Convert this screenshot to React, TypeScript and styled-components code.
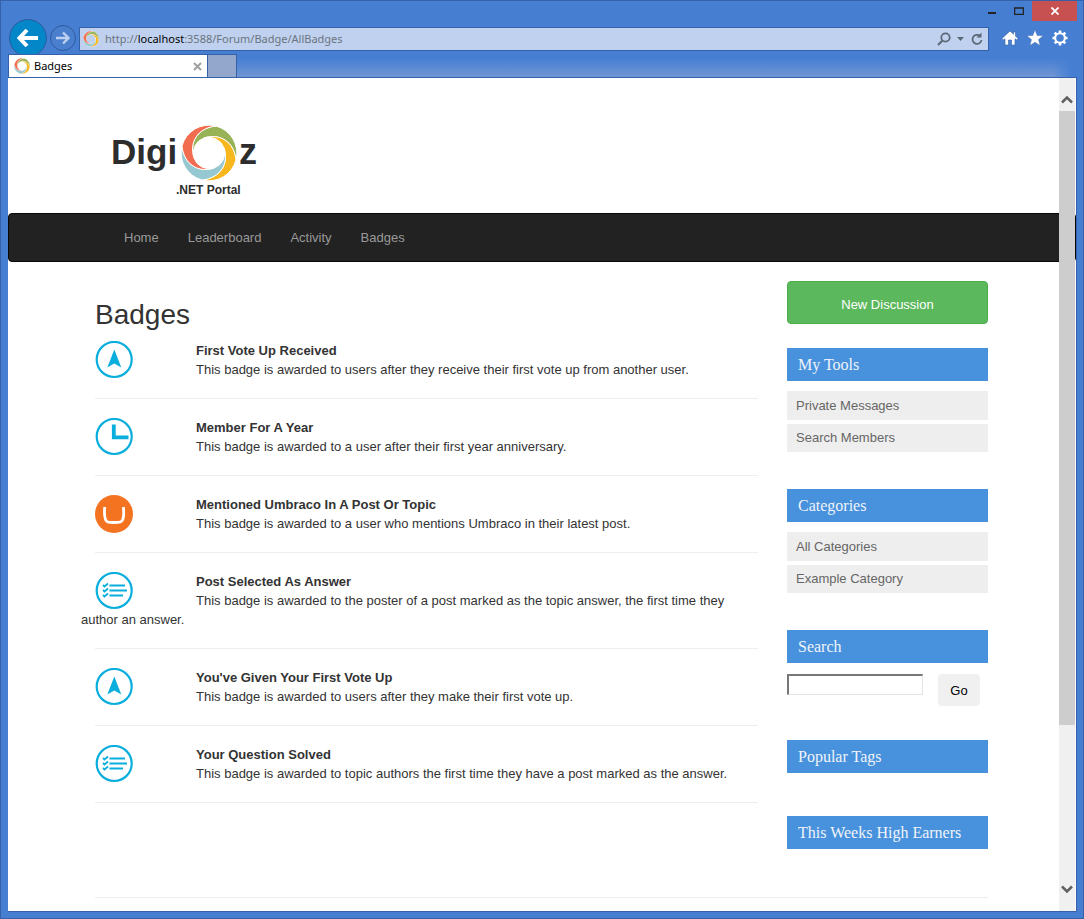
import React from 'react';
import styled, { createGlobalStyle } from 'styled-components';

const Global = createGlobalStyle`
  *, *::before, *::after { box-sizing: border-box; }
  body { margin: 0; background: #467fd2; }
  h1, h2, p, ul { margin: 0; padding: 0; }
  button, input { font: inherit; }
  a { color: inherit; text-decoration: none; }
`;

const sans = '"Liberation Sans", Arial, sans-serif';
const serif = '"Liberation Serif", "Times New Roman", serif';
const chromeFont = '"Noto Sans", "Segoe UI", sans-serif';

const Frame = styled.div`
  display: flex;
  flex-direction: column;
  min-height: 100vh;
  padding: 0 6px 6px 7px;
  background: #467fd2;
  border: 1px solid #3561a8;
`;

const TitleBar = styled.div`
  display: flex;
  justify-content: flex-end;
  height: 20px;
`;

const WindowButton = styled.button<{ $close?: boolean }>`
  display: flex;
  align-items: center;
  justify-content: center;
  width: ${(p) => (p.$close ? 45 : 27)}px;
  height: 20px;
  padding: 0;
  border: 0;
  color: ${(p) => (p.$close ? '#fff' : '#222')};
  background: ${(p) => (p.$close ? '#c75050' : 'transparent')};
`;

const Toolbar = styled.div`
  display: flex;
  align-items: center;
  height: 33px;
  padding-right: 8px;
`;

const RoundButton = styled.button<{ $primary?: boolean }>`
  flex: none;
  display: flex;
  align-items: center;
  justify-content: center;
  width: ${(p) => (p.$primary ? 38 : 26)}px;
  height: ${(p) => (p.$primary ? 38 : 26)}px;
  margin-left: ${(p) => (p.$primary ? 1 : 3)}px;
  padding: 0;
  border: 1px solid #2f5a9f;
  border-radius: 50%;
  background: ${(p) => (p.$primary ? '#0487c8' : '#4a7fce')};
`;

const AddressBar = styled.div`
  flex: 1;
  display: flex;
  align-items: center;
  gap: 6px;
  height: 24px;
  margin: 3px 12px 0 3px;
  padding: 0 4px 0 3px;
  border: 1px solid #3561a8;
  background: #bfd1ee;
  font: 11px/22px ${chromeFont};
  color: #6b7480;
`;

const Url = styled.div`
  flex: 1;
  white-space: nowrap;
  b { font-weight: 400; color: #000; }
`;

const IconButton = styled.button`
  display: flex;
  align-items: center;
  justify-content: center;
  padding: 0;
  border: 0;
  background: transparent;
`;

const Actions = styled.div`
  display: flex;
  gap: 7px;
`;

const TabStrip = styled.div`
  display: flex;
  height: 23px;
  background:
    linear-gradient(to right, transparent calc(100% - 24px), #467fd2 calc(100% - 6px)),
    linear-gradient(#467fd2 20%, #7196d3);
`;

const Tab = styled.div`
  display: flex;
  align-items: center;
  gap: 4px;
  width: 200px;
  padding: 0 5px;
  border: 1px solid #3561a8;
  border-bottom: 0;
  background: #fff;
  font: 11px/22px ${chromeFont};
  color: #000;
  span { flex: 1; }
`;

const NewTab = styled.button`
  width: 29px;
  padding: 0;
  border: 1px solid #3561a8;
  border-width: 1px 1px 0 0;
  background: #93a7cc;
`;

const Viewport = styled.div`
  position: relative;
  flex: 1;
  border: 1px solid #3561a8;
  border-width: 1px 1px 1px 0;
  background: #fff;
  font: 13px/19px ${sans};
  color: #333;
`;

const ScrollBar = styled.div`
  position: absolute;
  top: 0;
  right: 1px;
  bottom: 0;
  display: flex;
  flex-direction: column;
  width: 16px;
  background: #f0f0f0;
`;

const ScrollArrow = styled.button<{ $down?: boolean }>`
  display: flex;
  align-items: center;
  justify-content: center;
  height: 33px;
  flex: none;
  padding: ${(p) => (p.$down ? '0 0 10px' : '10px 0 0')};
  border: 0;
  background: #f0f0f0;
`;

const ScrollTrack = styled.div`
  flex: 1;
`;

const ScrollThumb = styled.div`
  height: 80%;
  background: #cdcdcd;
`;

const Container = styled.div`
  margin: 0 88px 0 87px;
`;

const LogoLink = styled.a`
  display: block;
  width: 180px;
  height: 135px;
  padding: 35px 0 0 5px;
`;

const Nav = styled.nav`
  height: 49px;
  border: 1px solid #080808;
  border-radius: 4px;
  background: #222;
`;

const NavList = styled(Container)`
  display: flex;
  gap: 29px;
  padding-left: 28px;
  line-height: 47px;
  color: #999;
`;

const Columns = styled(Container)`
  display: grid;
  grid-template-columns: 1fr 201px;
  gap: 29px;
  padding-top: 19px;
`;

const Title = styled.h1`
  margin: 16px 0 8px;
  font: 400 28px/36px ${sans};
`;

const BadgeItem = styled.article`
  margin-bottom: 19px;
  padding-bottom: 19px;
  border-bottom: 1px solid #eee;
`;

const BadgeIcon = styled.svg`
  float: left;
  width: 38px;
  height: 38px;
  margin-right: 63px;
`;

const BadgeName = styled.h2`
  font: 700 13px/19px ${sans};
`;

const BadgeText = styled.p`
  margin-left: -14px;
`;

const NewDiscussion = styled.button`
  display: block;
  width: 100%;
  height: 43px;
  margin-bottom: 24px;
  padding: 3px 0 0;
  border: 1px solid #4cae4c;
  border-radius: 4px;
  background: #5cb85c;
  color: #fff;
`;

const Panel = styled.section<{ $gap?: number }>`
  margin-bottom: ${(p) => p.$gap ?? 37}px;
`;

const PanelTitle = styled.h2`
  padding: 0 11px;
  background: #4891dc;
  color: #f0f4fa;
  font: 400 16px/33px ${serif};
`;

const PanelLink = styled.a<{ $first?: boolean }>`
  display: block;
  margin-top: ${(p) => (p.$first ? 10 : 4)}px;
  padding: 0 9px;
  background: #eee;
  color: #666;
  line-height: ${(p) => (p.$first ? 29 : 28)}px;
`;

const SearchForm = styled.form`
  display: flex;
  align-items: flex-start;
  gap: 15px;
  padding-top: 11px;
  input {
    width: 136px;
    height: 21px;
    padding: 1px 4px;
    border: 1px solid;
    border-color: #777 #e3e3e3 #e3e3e3 #777;
    border-width: 2px 1px 1px 2px;
    background: #fff;
  }
  button {
    width: 42px;
    height: 32px;
    padding: 0;
    border: 0;
    border-radius: 4px;
    background: #f0f0f0;
    color: #000;
  }
`;

const FooterRule = styled(Container)`
  margin-top: 5px;
  height: 13px;
  border-top: 1px solid #eee;
`;

const ringColours = ['#98b355', '#f9b71e', '#96c8d1', '#f26c4f'];

const Ring = () => (
  <g transform="translate(28 28)">
    {ringColours.map((colour, i) => (
      <path
        key={colour}
        d="M-15 5C-20 -10 -12 -25 7 -27A28 28 0 0 1 27 7C25 -12 10 -20 -5 -15A16 16 0 0 0 -15 5Z"
        fill={colour}
        stroke="#fff"
        strokeWidth="1"
        transform={`rotate(${i * 90})`}
      />
    ))}
  </g>
);

const MiniRing = () => (
  <svg width="16" height="16" viewBox="0 0 56 56" aria-hidden="true"><Ring /></svg>
);

const Logo = () => (
  <svg width="170" height="84" viewBox="0 0 170 84" role="img" aria-label="DigiOz .NET Portal">
    <g fontFamily='"Liberation Sans", Arial, sans-serif' fontWeight="700" fill="#2d2d2d">
      <text x="11" y="51" fontSize="35">Digi</text>
      <text x="139" y="51" fontSize="36">z</text>
      <text x="76" y="81" fontSize="12">.NET Portal</text>
    </g>
    <g transform="translate(81 12)"><Ring /></g>
  </svg>
);

type Kind = 'vote' | 'clock' | 'umbraco' | 'list';

const BadgeGlyph = ({ kind }: { kind: Kind }) => (
  <BadgeIcon viewBox="0 0 38 38" aria-hidden="true">
    {kind === 'umbraco' ? (
      <>
        <circle cx="19" cy="19" r="19" fill="#f47321" />
        <path d="M9.800 12C9.200 17 9.600 22 10.500 24.500C11.500 27.200 13 27.500 19 27.500C25 27.500 26.700 27.200 27.800 24.500C28.700 22 28.900 17 28.300 12" fill="none" stroke="#fff" strokeWidth="2.800" />
      </>
    ) : (
      <circle cx="19.200" cy="18.500" r="17.500" fill="none" stroke="#0aaedd" strokeWidth="2.200" />
    )}
    {kind === 'vote' && <path d="M19.300 8.500L26.300 26.500L19.300 22.500L12.300 26.500Z" fill="#0aaedd" />}
    {kind === 'clock' && <path d="M18.800 6.500V19.300H33.500" fill="none" stroke="#0aaedd" strokeWidth="3.800" />}
    {kind === 'list' && (
      <path d="M8 13L9.500 14.500L13 11.500M8 18L9.500 19.500L13 16.500M8 23L9.500 24.500L13 21.500M14.500 13.500H30M14.500 18.500H32M14.500 23.500H28" fill="none" stroke="#0aaedd" strokeWidth="1.800" />
    )}
  </BadgeIcon>
);

const badges: { kind: Kind; name: string; text: string }[] = [
  { kind: 'vote', name: 'First Vote Up Received', text: 'This badge is awarded to users after they receive their first vote up from another user.' },
  { kind: 'clock', name: 'Member For A Year', text: 'This badge is awarded to a user after their first year anniversary.' },
  { kind: 'umbraco', name: 'Mentioned Umbraco In A Post Or Topic', text: 'This badge is awarded to a user who mentions Umbraco in their latest post.' },
  { kind: 'list', name: 'Post Selected As Answer', text: 'This badge is awarded to the poster of a post marked as the topic answer, the first time they author an answer.' },
  { kind: 'vote', name: "You've Given Your First Vote Up", text: 'This badge is awarded to users after they make their first vote up.' },
  { kind: 'list', name: 'Your Question Solved', text: 'This badge is awarded to topic authors the first time they have a post marked as the answer.' },
];

const navItems = ['Home', 'Leaderboard', 'Activity', 'Badges'];

const gearTeeth = [0, 45, 90, 135, 180, 225, 270, 315];

export default function App() {
  return (
    <>
      <Global />
      <Frame>
        <TitleBar>
          <WindowButton aria-label="Minimize"><svg width="8" height="8"><path d="M0 6H8" stroke="currentColor" strokeWidth="2" /></svg></WindowButton>
          <WindowButton aria-label="Maximize"><svg width="10" height="8"><path d="M.5 1V7.500H9.500V1M0 1H10" fill="none" stroke="currentColor" strokeWidth="1.500" /></svg></WindowButton>
          <WindowButton $close aria-label="Close"><svg width="8" height="8"><path d="M.5 .5L7.500 7.500M7.500 .5L.5 7.500" stroke="currentColor" strokeWidth="1.800" /></svg></WindowButton>
        </TitleBar>
        <Toolbar>
          <RoundButton $primary aria-label="Back"><svg width="22" height="20"><path d="M21 10H3M10 2L2.500 10L10 18" fill="none" stroke="#fff" strokeWidth="4" /></svg></RoundButton>
          <RoundButton aria-label="Forward"><svg width="14" height="14"><path d="M0 7H12M7 1.500L12.500 7L7 12.500" fill="none" stroke="#bdd0ef" strokeWidth="2.400" /></svg></RoundButton>
          <AddressBar>
            <MiniRing />
            <Url>http://<b>localhost</b>:3588/Forum/Badge/AllBadges</Url>
            <IconButton aria-label="Search"><svg width="14" height="14"><circle cx="8.500" cy="5.500" r="4.200" fill="none" stroke="#5c6878" strokeWidth="1.800" /><path d="M5.500 8.500L1 13" stroke="#5c6878" strokeWidth="2" /></svg></IconButton>
            <IconButton aria-label="Search options"><svg width="7" height="4"><path d="M0 0H7L3.500 4Z" fill="#5c6878" /></svg></IconButton>
            <IconButton aria-label="Refresh"><svg width="14" height="14"><path d="M10 4A4.500 4.500 0 1 0 11.500 8" fill="none" stroke="#5c6878" strokeWidth="1.800" /><path d="M6.500 5.500H11.500V.5Z" fill="#5c6878" /></svg></IconButton>
          </AddressBar>
          <Actions>
            <IconButton aria-label="Home"><svg width="18" height="18"><path d="M9 2L1 9.500L2.500 11L4 9.800V16H7.500V11H10.500V16H14V9.800L15.500 11L17 9.500L14.500 7V3H12.500V5.200Z" fill="#fff" stroke="#3561a8" strokeWidth=".6" /></svg></IconButton>
            <IconButton aria-label="Favorites"><svg width="18" height="18"><path d="M9 .8L11.200 6.500L17.200 6.800L12.500 10.600L14.100 16.500L9 13.200L3.900 16.500L5.500 10.600L.8 6.800L6.800 6.500Z" fill="#fff" stroke="#3561a8" strokeWidth=".4" /></svg></IconButton>
            <IconButton aria-label="Tools"><svg width="18" height="18"><circle cx="9" cy="9" r="4.800" fill="none" stroke="#fff" strokeWidth="2" />{gearTeeth.map((a) => <path key={a} d="M9 1.500V4" stroke="#fff" strokeWidth="2.600" transform={`rotate(${a} 9 9)`} />)}</svg></IconButton>
          </Actions>
        </Toolbar>
        <TabStrip>
          <Tab>
            <MiniRing />
            <span>Badges</span>
            <IconButton aria-label="Close tab"><svg width="9" height="9"><path d="M1 1L8 8M8 1L1 8" stroke="#a0a0a0" strokeWidth="2" /></svg></IconButton>
          </Tab>
          <NewTab aria-label="New tab" />
        </TabStrip>
        <Viewport>
          <Container><LogoLink href="#" aria-label="DigiOz"><Logo /></LogoLink></Container>
          <Nav>
            <NavList>{navItems.map((n) => <a key={n} href="#">{n}</a>)}</NavList>
          </Nav>
          <Columns>
            <main>
              <Title>Badges</Title>
              {badges.map((b) => (
                <BadgeItem key={b.name}>
                  <BadgeGlyph kind={b.kind} />
                  <BadgeName>{b.name}</BadgeName>
                  <BadgeText>{b.text}</BadgeText>
                </BadgeItem>
              ))}
            </main>
            <aside>
              <NewDiscussion>New Discussion</NewDiscussion>
              <Panel>
                <PanelTitle>My Tools</PanelTitle>
                <PanelLink $first href="#">Private Messages</PanelLink>
                <PanelLink href="#">Search Members</PanelLink>
              </Panel>
              <Panel>
                <PanelTitle>Categories</PanelTitle>
                <PanelLink $first href="#">All Categories</PanelLink>
                <PanelLink href="#">Example Category</PanelLink>
              </Panel>
              <Panel $gap={34}>
                <PanelTitle>Search</PanelTitle>
                <SearchForm onSubmit={(e) => e.preventDefault()}>
                  <input type="text" aria-label="Search" />
                  <button type="submit">Go</button>
                </SearchForm>
              </Panel>
              <Panel $gap={43}><PanelTitle>Popular Tags</PanelTitle></Panel>
              <Panel $gap={43}><PanelTitle>This Weeks High Earners</PanelTitle></Panel>
            </aside>
          </Columns>
          <FooterRule />
          <ScrollBar>
            <ScrollArrow aria-label="Scroll up"><svg width="12" height="9"><path d="M1 7.500L6 2.500L11 7.500" fill="none" stroke="#606060" strokeWidth="2.500" /></svg></ScrollArrow>
            <ScrollTrack><ScrollThumb /></ScrollTrack>
            <ScrollArrow $down aria-label="Scroll down"><svg width="12" height="9"><path d="M1 1.500L6 6.500L11 1.500" fill="none" stroke="#606060" strokeWidth="2.500" /></svg></ScrollArrow>
          </ScrollBar>
        </Viewport>
      </Frame>
    </>
  );
}
